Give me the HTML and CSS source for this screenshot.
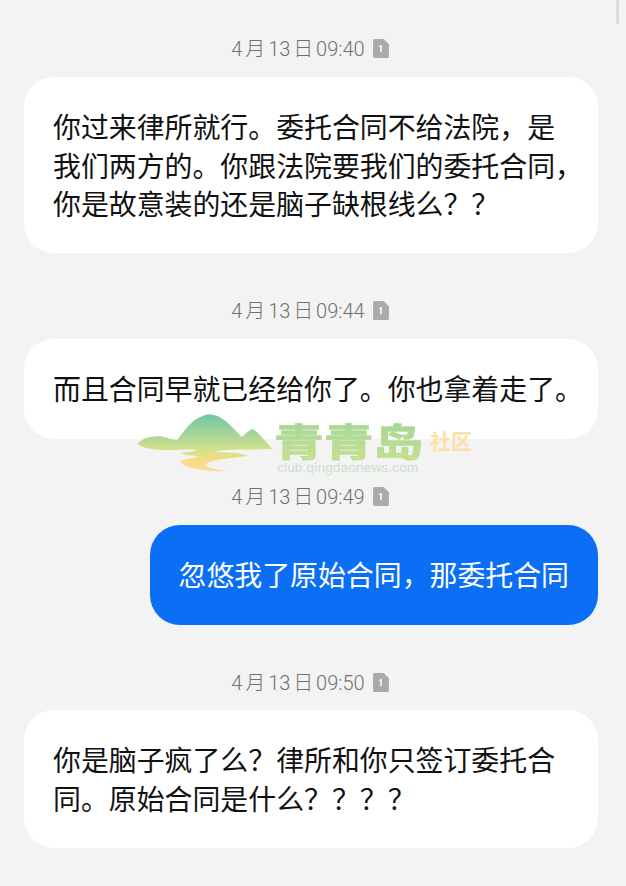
FILE: index.html
```html
<!DOCTYPE html>
<html lang="zh">
<head>
<meta charset="utf-8">
<title>聊天</title>
<link rel="stylesheet" href="styles.css">
</head>
<body>
<main class="chat">
  <div class="time"><span>4 月 13 日 09:40</span><svg class="sim" viewBox="0 0 15 18"><path d="M1.500 0H10L15 5V16.500A1.500 1.500 0 0 1 13.500 18H1.500A1.500 1.500 0 0 1 0 16.500V1.500A1.500 1.500 0 0 1 1.500 0Z" fill="#aaa"/><path d="M6 6.500L8.200 5.500V12.500H6.800V7.500L6 7.800Z" fill="#fff"/></svg></div>
  <div class="bubble in">你过来律所就行。委托合同不给法院，是<br>我们两方的。你跟法院要我们的委托合同，<br>你是故意装的还是脑子缺根线么？？</div>

  <div class="time"><span>4 月 13 日 09:44</span><svg class="sim" viewBox="0 0 15 18"><path d="M1.500 0H10L15 5V16.500A1.500 1.500 0 0 1 13.500 18H1.500A1.500 1.500 0 0 1 0 16.500V1.500A1.500 1.500 0 0 1 1.500 0Z" fill="#aaa"/><path d="M6 6.500L8.200 5.500V12.500H6.800V7.500L6 7.800Z" fill="#fff"/></svg></div>
  <div class="bubble in">而且合同早就已经给你了。你也拿着走了。</div>

  <div class="time"><span>4 月 13 日 09:49</span><svg class="sim" viewBox="0 0 15 18"><path d="M1.500 0H10L15 5V16.500A1.500 1.500 0 0 1 13.500 18H1.500A1.500 1.500 0 0 1 0 16.500V1.500A1.500 1.500 0 0 1 1.500 0Z" fill="#aaa"/><path d="M6 6.500L8.200 5.500V12.500H6.800V7.500L6 7.800Z" fill="#fff"/></svg></div>
  <div class="bubble out">忽悠我了原始合同，那委托合同</div>

  <div class="time last"><span>4 月 13 日 09:50</span><svg class="sim" viewBox="0 0 15 18"><path d="M1.500 0H10L15 5V16.500A1.500 1.500 0 0 1 13.500 18H1.500A1.500 1.500 0 0 1 0 16.500V1.500A1.500 1.500 0 0 1 1.500 0Z" fill="#aaa"/><path d="M6 6.500L8.200 5.500V12.500H6.800V7.500L6 7.800Z" fill="#fff"/></svg></div>
  <div class="bubble in">你是脑子疯了么？律所和你只签订委托合<br>同。原始合同是什么？？？？</div>
</main>

<div class="scrollbar"></div>

<div class="mark">
  <svg class="mark-logo" viewBox="0 0 438 225">
    <defs>
      <linearGradient id="hill" gradientUnits="userSpaceOnUse" x1="0" y1="28" x2="0" y2="198">
        <stop offset="0" stop-color="#72c6a2"/>
        <stop offset="0.35" stop-color="#a6d59a"/>
        <stop offset="0.6" stop-color="#cfe08c"/>
        <stop offset="0.8" stop-color="#f6dc84"/>
        <stop offset="1" stop-color="#fbdc90"/>
      </linearGradient>
    </defs>
    <path d="M22 118C35 100 60 92 90 94C110 96 125 106 142 104C165 80 180 40 235 28C275 28 300 60 335 96C345 90 355 75 368 72C385 78 410 115 428 132L340 134C310 133 275 136 250 140C270 142 320 140 355 152C325 158 270 160 240 170C225 176 222 182 240 188C256 193 275 196 292 198C255 200 205 196 175 185C160 180 152 174 150 168C165 160 190 160 205 155C195 151 180 151 170 150L150 145C165 141 185 141 200 138L190 133C165 133 150 136 130 135C95 136 50 135 22 118Z" fill="url(#hill)"/>
  </svg>
  <div class="mark-text">
    <div class="mark-top"><span class="mark-name">青青岛</span><span class="mark-sub">社区</span></div>
    <div class="mark-url">club.qingdaonews.com</div>
  </div>
</div>
</body>
</html>
```
FILE: styles.css
```css
html, body {
  margin: 0;
  padding: 0;
  height: 886px;
  overflow: hidden;
  background: #f3f3f3;
}

body {
  position: relative;
  font-family: "Noto Sans CJK SC", "Noto Sans", sans-serif;
}

.chat {
  display: flex;
  flex-direction: column;
  padding: 0 28px 0 24px;
}

.time {
  display: flex;
  justify-content: center;
  align-items: center;
  gap: 8px;
  height: 20px;
  margin: 48px 0 18px;
  padding-right: 2px;
  font-family: Roboto, "Noto Sans CJK SC", sans-serif;
  font-size: 20px;
  font-weight: 300;
  line-height: 20px;
  word-spacing: -2px;
  color: #707070;
  white-space: nowrap;
}

.time:first-child {
  margin-top: 39px;
}

.time.last {
  margin-bottom: 17px;
}

.sim {
  width: 16px;
  height: 19px;
  margin-bottom: 2px;
  flex: none;
}

.bubble {
  box-sizing: border-box;
  min-height: 100px;
  padding: 30.250px 29px;
  border-radius: 30px;
  font-size: 27.900px;
  line-height: 38.500px;
  white-space: nowrap;
}

.bubble.in {
  background: #fff;
  color: #111;
}

.bubble.out {
  align-self: flex-end;
  background: #0b6ff5;
  color: #fff;
}

.scrollbar {
  position: absolute;
  top: 0;
  right: 7px;
  width: 3px;
  height: 24px;
  border-radius: 2px;
  background: #dcdcdc;
}

.mark {
  position: absolute;
  left: 130px;
  top: 405px;
  display: flex;
  gap: 1px;
}

.mark-logo {
  width: 146px;
  height: 75px;
  flex: none;
}

.mark-text {
  display: flex;
  flex-direction: column;
  padding-top: 15px;
}

.mark-top {
  display: flex;
  align-items: center;
  gap: 10px;
  height: 40px;
}

.mark-name {
  flex: none;
  width: 114px;
  margin: 0 32px 0 -3px;
  font-size: 38px;
  font-weight: 700;
  line-height: 40px;
  background: linear-gradient(180deg, #9cd6a2, #cbe08a);
  -webkit-background-clip: text;
  background-clip: text;
  color: transparent;
  -webkit-text-stroke: 0.800px #b8dc94;
  transform: scaleX(1.310);
  transform-origin: left center;
}

.mark-sub {
  font-size: 21px;
  font-weight: 700;
  line-height: 26px;
  color: #fbe2a4;
}

.mark-url {
  font-family: "Liberation Sans", sans-serif;
  font-size: 13.500px;
  line-height: 15px;
  letter-spacing: 0.2px;
  color: #cde0cc;
}
```
